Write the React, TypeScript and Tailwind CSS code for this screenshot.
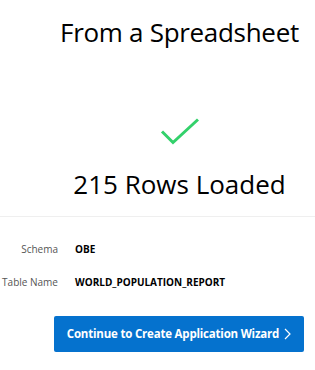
export default function App() {
  return (
    <div className="h-[370px] w-[315px] overflow-hidden bg-white font-['Open_Sans',sans-serif] text-black">
      <div className="flex flex-col items-center pl-[44px] pt-[16px]">
        <h1 className="whitespace-nowrap text-[26px] leading-[32px] font-medium tracking-[-0.3px]">From a Spreadsheet</h1>
        <svg className="mt-[70px] h-[28px] w-[40px]" viewBox="0 0 40 28" fill="none">
          <path d="M2 13.5 L13 24.5 L38 1.5" stroke="#33d16b" strokeWidth="3" />
        </svg>
        <div className="mt-[21px] whitespace-nowrap text-[26px] leading-[34px]">215 Rows Loaded</div>
      </div>
      <div className="mt-[15px] h-px w-full bg-[#efefef]" />
      <div className="grid grid-cols-[58px_1fr] gap-x-[17px] gap-y-[17px] pt-[24px] text-[10px] leading-[16px]">
        <div className="whitespace-nowrap text-right text-[#555]">Schema</div>
        <div className="font-bold">OBE</div>
        <div className="whitespace-nowrap text-right text-[#555]">Table Name</div>
        <div className="font-bold">WORLD_POPULATION_REPORT</div>
      </div>
      <div className="pl-[54px] pt-[26px]">
        <button className="flex h-[36px] w-[250px] items-center justify-center gap-[5px] whitespace-nowrap rounded-[2px] bg-[#0572ce] text-[11.5px] font-bold tracking-[-0.2px] text-white">
          Continue to Create Application Wizard
          <svg className="h-[12px] w-[7px]" viewBox="0 0 7 12" fill="none">
            <path d="M1 1 L6 6 L1 11" stroke="white" strokeWidth="1.2" />
          </svg>
        </button>
      </div>
    </div>
  );
}
